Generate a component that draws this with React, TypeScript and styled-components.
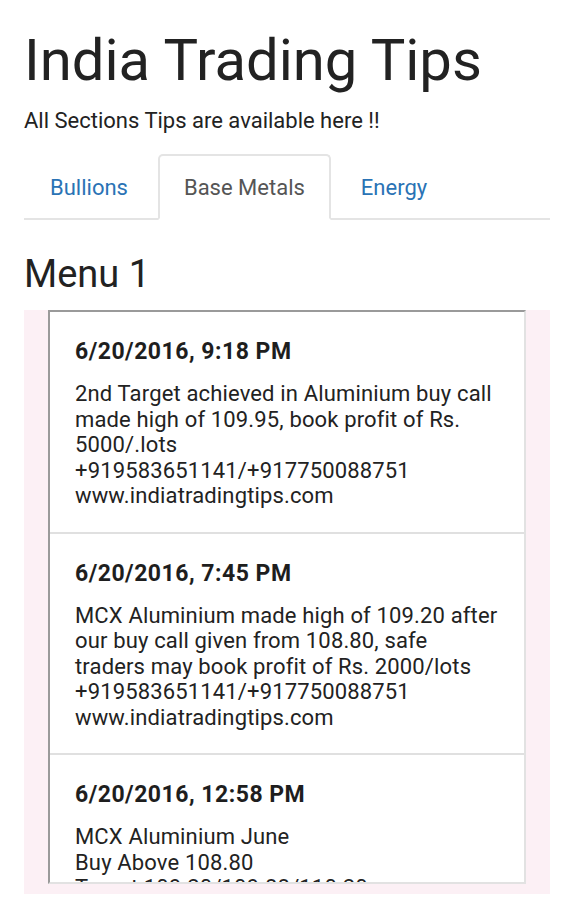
import React from 'react'
import styled, { createGlobalStyle } from 'styled-components'

const GlobalStyle = createGlobalStyle`
   html, body {
      margin: 0;
      padding: 0;
      background: #fff;
   }
   body {
      font-family: Roboto, 'Noto Sans', Arial, sans-serif;
      color: #222;
   }
`

const Page = styled.div`
   padding: 0 24px;
   box-sizing: border-box;
   width: 574px;
`

const Title = styled.h1`
   margin: 0;
   padding-top: 27px;
   font-size: 58px;
   font-weight: 400;
   line-height: 66px;
   color: #222;
`

const Subtitle = styled.p`
   margin: 14px 0 0;
   font-size: 22px;
   line-height: 28px;
   color: #222;
`

const Tabs = styled.ul`
   list-style: none;
   display: flex;
   margin: 19px 0 0;
   padding: 0;
   border-bottom: 2px solid #e4e4e4;
`

const Tab = styled.li<{ $active?: boolean }>`
   box-sizing: border-box;
   margin: 0 4px -2px 0;
   padding: 0 24px;
   height: 66px;
   display: flex;
   align-items: center;
   font-size: 22px;
   color: ${(p) => (p.$active ? '#555' : '#2a73b5')};
   background: ${(p) => (p.$active ? '#fff' : 'transparent')};
   border: 2px solid ${(p) => (p.$active ? '#e4e4e4' : 'transparent')};
   border-bottom-color: ${(p) => (p.$active ? '#fff' : 'transparent')};
   border-radius: 5px 5px 0 0;
`

const SectionTitle = styled.h2`
   margin: 32px 0 0;
   font-size: 38px;
   font-weight: 400;
   line-height: 44px;
   color: #222;
`

const Frame = styled.div`
   margin-top: 14px;
   background: #fcf0f5;
   padding: 0 24px 10px;
`

const List = styled.div`
   height: 574px;
   overflow: hidden;
   background: #fff;
   border-style: solid;
   border-width: 2px;
   border-color: #9a9a9a #e2e2e2 #e2e2e2 #9a9a9a;
   box-sizing: border-box;
`

const Item = styled.div`
   padding: 27px 22px 23px 25px;
   border-bottom: 2px solid #e0e0e0;
`

const Stamp = styled.div`
   font-size: 23px;
   font-weight: 700;
   line-height: 26px;
   letter-spacing: 0.5px;
   color: #1e1e1e;
`

const Message = styled.div`
   margin-top: 16px;
   font-size: 22px;
   line-height: 25.5px;
   letter-spacing: 0.15px;
   color: #222;
   white-space: pre-line;
`

const tips = [
   {
      time: '6/20/2016, 9:18 PM',
      text: '2nd Target achieved in Aluminium buy call\nmade high of 109.95, book profit of Rs.\n5000/.lots\n+919583651141/+917750088751\nwww.indiatradingtips.com',
   },
   {
      time: '6/20/2016, 7:45 PM',
      text: 'MCX Aluminium made high of 109.20 after\nour buy call given from 108.80, safe\ntraders may book profit of Rs. 2000/lots\n+919583651141/+917750088751\nwww.indiatradingtips.com',
   },
   {
      time: '6/20/2016, 12:58 PM',
      text: 'MCX Aluminium June\nBuy Above 108.80\nTarget 109.20/109.88/110.20\nStoploss 108.00\n+919583651141/+917750088751\nwww.indiatradingtips.com',
   },
]

const App: React.FC = () => {
   return (
      <Page>
         <GlobalStyle />
         <Title>India Trading Tips</Title>
         <Subtitle>All Sections Tips are available here !!</Subtitle>
         <Tabs>
            <Tab>Bullions</Tab>
            <Tab $active>Base Metals</Tab>
            <Tab>Energy</Tab>
         </Tabs>
         <SectionTitle>Menu 1</SectionTitle>
         <Frame>
            <List>
               {tips.map((tip) => (
                  <Item key={tip.time}>
                     <Stamp>{tip.time}</Stamp>
                     <Message>{tip.text}</Message>
                  </Item>
               ))}
            </List>
         </Frame>
      </Page>
   )
}

export default App
